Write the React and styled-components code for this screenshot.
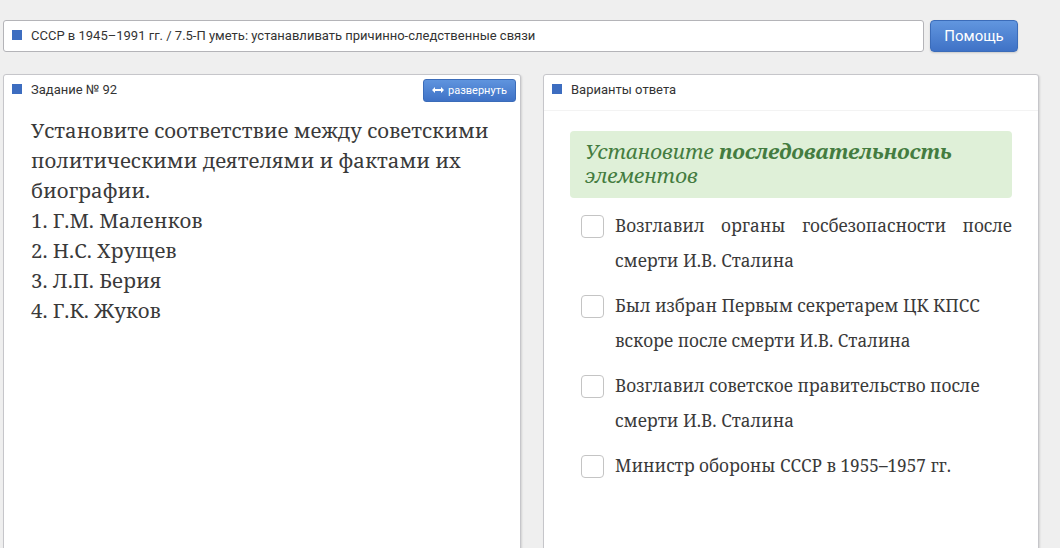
import React from "react";
import styled, { createGlobalStyle } from "styled-components";

const Global = createGlobalStyle`
  html, body { margin: 0; padding: 0; }
  body {
    background: #efefef;
    font-family: Roboto, "Liberation Sans", sans-serif;
    overflow: hidden;
  }
`;

const Page = styled.div`
  padding: 20px 0 0 3px;
  width: 1060px;
  box-sizing: border-box;
`;

const TopRow = styled.div`
  display: flex;
  align-items: stretch;
  gap: 6px;
  height: 32px;
`;

const Crumb = styled.div`
  width: 921px;
  box-sizing: border-box;
  background: #fff;
  border: 1px solid #b4b4b8;
  border-radius: 3px;
  display: flex;
  align-items: center;
  gap: 9px;
  padding: 0 0 2px 8px;
  font-size: 13px;
  color: #333;
`;

const Square = styled.span`
  width: 10px;
  height: 10px;
  background: #3d6dc0;
  flex: none;
`;

const HelpButton = styled.button`
  width: 88px;
  box-sizing: border-box;
  border: 1px solid #3b6cb9;
  border-radius: 4px;
  background: linear-gradient(#6196df, #3f72c6);
  color: #fff;
  font-family: Roboto, "Liberation Sans", sans-serif;
  font-size: 15px;
  padding: 0 0 1px;
  box-shadow: 0 1px 2px rgba(0,0,0,0.15);
`;

const Panels = styled.div`
  display: flex;
  gap: 22px;
  margin-top: 22px;
`;

const Panel = styled.section`
  width: ${p => p.$w}px;
  height: 500px;
  box-sizing: border-box;
  background: #fff;
  border: 1px solid #c6c6ca;
  border-radius: 3px;
  box-shadow: 1px 1px 2px rgba(0,0,0,0.12);
`;

const PanelHead = styled.div`
  height: 36px;
  box-sizing: border-box;
  display: flex;
  align-items: flex-start;
  justify-content: space-between;
  padding: 4px 4px 0 8px;
  border-bottom: 1px solid ${p => (p.$line ? "#f3f3f3" : "transparent")};
`;

const HeadTitle = styled.div`
  display: flex;
  align-items: center;
  gap: 9px;
  height: 20px;
  font-size: 13px;
  color: #333;
`;

const ExpandButton = styled.button`
  width: 93px;
  height: 23px;
  box-sizing: border-box;
  border: 1px solid #3b6cb9;
  border-radius: 3px;
  background: linear-gradient(#5f94de, #3f72c6);
  color: #fff;
  font-family: Roboto, "Liberation Sans", sans-serif;
  font-size: 11px;
  display: flex;
  align-items: center;
  justify-content: center;
  gap: 4px;
  padding: 0 0 1px;
`;

const Serif = `"Noto Serif", "Droid Serif", "DejaVu Serif", serif`;

const TaskText = styled.div`
  padding: 4px 20px 0 27px;
  font-family: ${Serif};
  font-size: 20.4px;
  line-height: 30px;
  color: #3a3a3a;
`;

const Answers = styled.div`
  padding: 20px 26px 0 26px;
`;

const Hint = styled.div`
  background: #dff0d8;
  border-radius: 4px;
  padding: 8px 15px 11px;
  font-family: ${Serif};
  font-style: italic;
  font-size: 20.7px;
  line-height: 24px;
  color: #447c40;
  b { font-weight: bold; }
`;

const Options = styled.div`
  display: flex;
  flex-direction: column;
  gap: 10px;
  padding: 10px 0 0 11px;
`;

const Option = styled.label`
  display: flex;
  align-items: flex-start;
  gap: 11px;
`;

const Box = styled.span`
  width: 23px;
  height: 23px;
  box-sizing: border-box;
  border: 1px solid #c4c4c4;
  border-radius: 4px;
  background: #fff;
  flex: none;
  margin-top: 7px;
`;

const OptionText = styled.span`
  flex: 1;
  font-family: ${Serif};
  font-size: 17.2px;
  line-height: 35px;
  color: #3a3a3a;
  text-align: ${p => (p.$justify ? "justify" : "left")};
`;

const options = [
  { t: "Возглавил органы госбезопасности после смерти И.В. Сталина", j: true },
  { t: "Был избран Первым секретарем ЦК КПСС вскоре после смерти И.В. Сталина" },
  { t: "Возглавил советское правительство после смерти И.В. Сталина" },
  { t: "Министр обороны СССР в 1955–1957 гг." },
];

export default function App() {
  return (
    <>
      <Global />
      <Page>
        <TopRow>
          <Crumb>
            <Square />
            СССР в 1945–1991 гг. / 7.5-П уметь: устанавливать причинно-следственные связи
          </Crumb>
          <HelpButton>Помощь</HelpButton>
        </TopRow>
        <Panels>
          <Panel $w={518}>
            <PanelHead>
              <HeadTitle>
                <Square />
                Задание № 92
              </HeadTitle>
              <ExpandButton>
                <svg width="12" height="6" viewBox="0 0 12 6">
                  <path d="M0 3 L3 0 L3 2 L9 2 L9 0 L12 3 L9 6 L9 4 L3 4 L3 6 Z" fill="#fff" />
                </svg>
                развернуть
              </ExpandButton>
            </PanelHead>
            <TaskText>
              Установите соответствие между советскими политическими деятелями и фактами их биографии.
              <br />1. Г.М. Маленков
              <br />2. Н.С. Хрущев
              <br />3. Л.П. Берия
              <br />4. Г.К. Жуков
            </TaskText>
          </Panel>
          <Panel $w={496}>
            <PanelHead $line>
              <HeadTitle>
                <Square />
                Варианты ответа
              </HeadTitle>
            </PanelHead>
            <Answers>
              <Hint>
                Установите <b>последовательность</b> элементов
              </Hint>
              <Options>
                {options.map((o, i) => (
                  <Option key={i}>
                    <Box />
                    <OptionText $justify={o.j}>{o.t}</OptionText>
                  </Option>
                ))}
              </Options>
            </Answers>
          </Panel>
        </Panels>
      </Page>
    </>
  );
}
